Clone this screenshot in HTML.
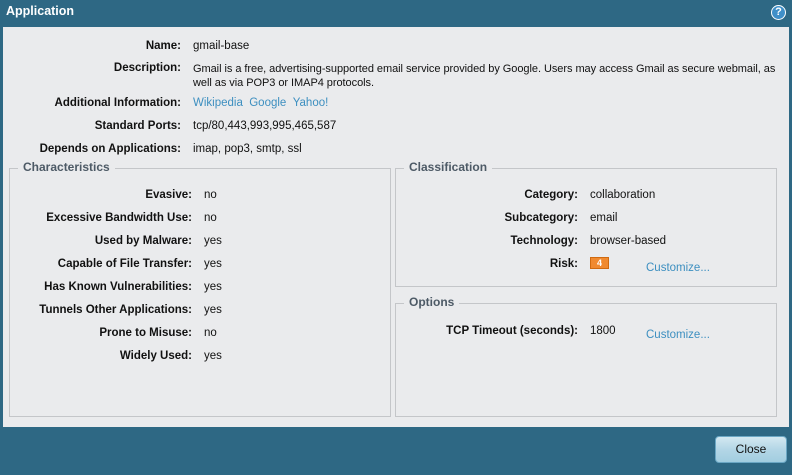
<!DOCTYPE html>
<html><head><style>
*{margin:0;padding:0;box-sizing:border-box}
body{width:792px;height:475px;background:#2e6884;font-family:"Liberation Sans",sans-serif;font-size:11.5px;color:#111;position:relative;overflow:hidden}
.t{position:absolute;white-space:nowrap}
.b{font-weight:bold;text-align:right}
.a{color:#3d8fc0}
#panel{position:absolute;left:3px;top:27px;width:786px;height:400px;background:#eaebed}
.fs{position:absolute;border:1px solid #c4c6c9}
.lg{position:absolute;top:-9px;left:8px;background:#eaebed;padding:0 5px;color:#4d5a66;font-weight:bold;font-size:12px}
</style></head><body>
<div class="t" style="left:6px;top:4px;color:#fff;font-weight:bold;font-size:12.5px">Application</div>
<div style="position:absolute;left:771px;top:5px;width:15px;height:15px;border-radius:50%;background:#3f8fc8;border:1.5px solid #fff;color:#fff;font-weight:bold;font-size:11px;text-align:center;line-height:12px">?</div>
<div id="panel"></div>
<div class="t b" style="right:611px;top:40px">Name:</div><div class="t" style="left:193px;top:40px">gmail-base</div>
<div class="t b" style="right:611px;top:62px">Description:</div>
<div class="t" style="left:193px;top:62px;line-height:14px;font-size:11px;letter-spacing:-0.05px">Gmail is a free, advertising-supported email service provided by Google. Users may access Gmail as secure webmail, as<br>well as via POP3 or IMAP4 protocols.</div>
<div class="t b" style="right:611px;top:97px">Additional Information:</div>
<div class="t a" style="left:193px;top:97px">Wikipedia&nbsp;&nbsp;Google&nbsp;&nbsp;Yahoo!</div>
<div class="t b" style="right:611px;top:120px">Standard Ports:</div><div class="t" style="left:193px;top:120px">tcp/80,443,993,995,465,587</div>
<div class="t b" style="right:611px;top:143px">Depends on Applications:</div><div class="t" style="left:193px;top:143px">imap, pop3, smtp, ssl</div>

<div class="fs" style="left:9px;top:168px;width:382px;height:249px"><div class="lg">Characteristics</div></div>
<div class="fs" style="left:395px;top:168px;width:382px;height:119px"><div class="lg">Classification</div></div>
<div class="fs" style="left:395px;top:303px;width:382px;height:114px"><div class="lg">Options</div></div>

<div class="t b" style="right:600px;top:189px">Evasive:</div><div class="t" style="left:204px;top:189px">no</div>
<div class="t b" style="right:600px;top:212px">Excessive Bandwidth Use:</div><div class="t" style="left:204px;top:212px">no</div>
<div class="t b" style="right:600px;top:235px">Used by Malware:</div><div class="t" style="left:204px;top:235px">yes</div>
<div class="t b" style="right:600px;top:258px">Capable of File Transfer:</div><div class="t" style="left:204px;top:258px">yes</div>
<div class="t b" style="right:600px;top:281px">Has Known Vulnerabilities:</div><div class="t" style="left:204px;top:281px">yes</div>
<div class="t b" style="right:600px;top:304px">Tunnels Other Applications:</div><div class="t" style="left:204px;top:304px">yes</div>
<div class="t b" style="right:600px;top:327px">Prone to Misuse:</div><div class="t" style="left:204px;top:327px">no</div>
<div class="t b" style="right:600px;top:350px">Widely Used:</div><div class="t" style="left:204px;top:350px">yes</div>

<div class="t b" style="right:214px;top:189px">Category:</div><div class="t" style="left:590px;top:189px">collaboration</div>
<div class="t b" style="right:214px;top:212px">Subcategory:</div><div class="t" style="left:590px;top:212px">email</div>
<div class="t b" style="right:214px;top:235px">Technology:</div><div class="t" style="left:590px;top:235px">browser-based</div>
<div class="t b" style="right:214px;top:258px">Risk:</div>
<div style="position:absolute;left:590px;top:257px;width:19px;height:12px;background:#f08a30;border:1px solid #d06a10;color:#fff;font-weight:bold;font-size:9px;text-align:center;line-height:10px">4</div>
<div class="t a" style="left:646px;top:262px">Customize...</div>
<div class="t b" style="right:214px;top:325px">TCP Timeout (seconds):</div><div class="t" style="left:590px;top:325px">1800</div>
<div class="t a" style="left:646px;top:329px">Customize...</div>

<div style="position:absolute;left:715px;top:436px;width:72px;height:27px;border-radius:4px;border:1px solid #6ba7c4;background:linear-gradient(#d3e8f1,#b3d6e6 50%,#a2cde0);text-align:center;line-height:25px;font-size:12px;color:#111">Close</div>
</body></html>
